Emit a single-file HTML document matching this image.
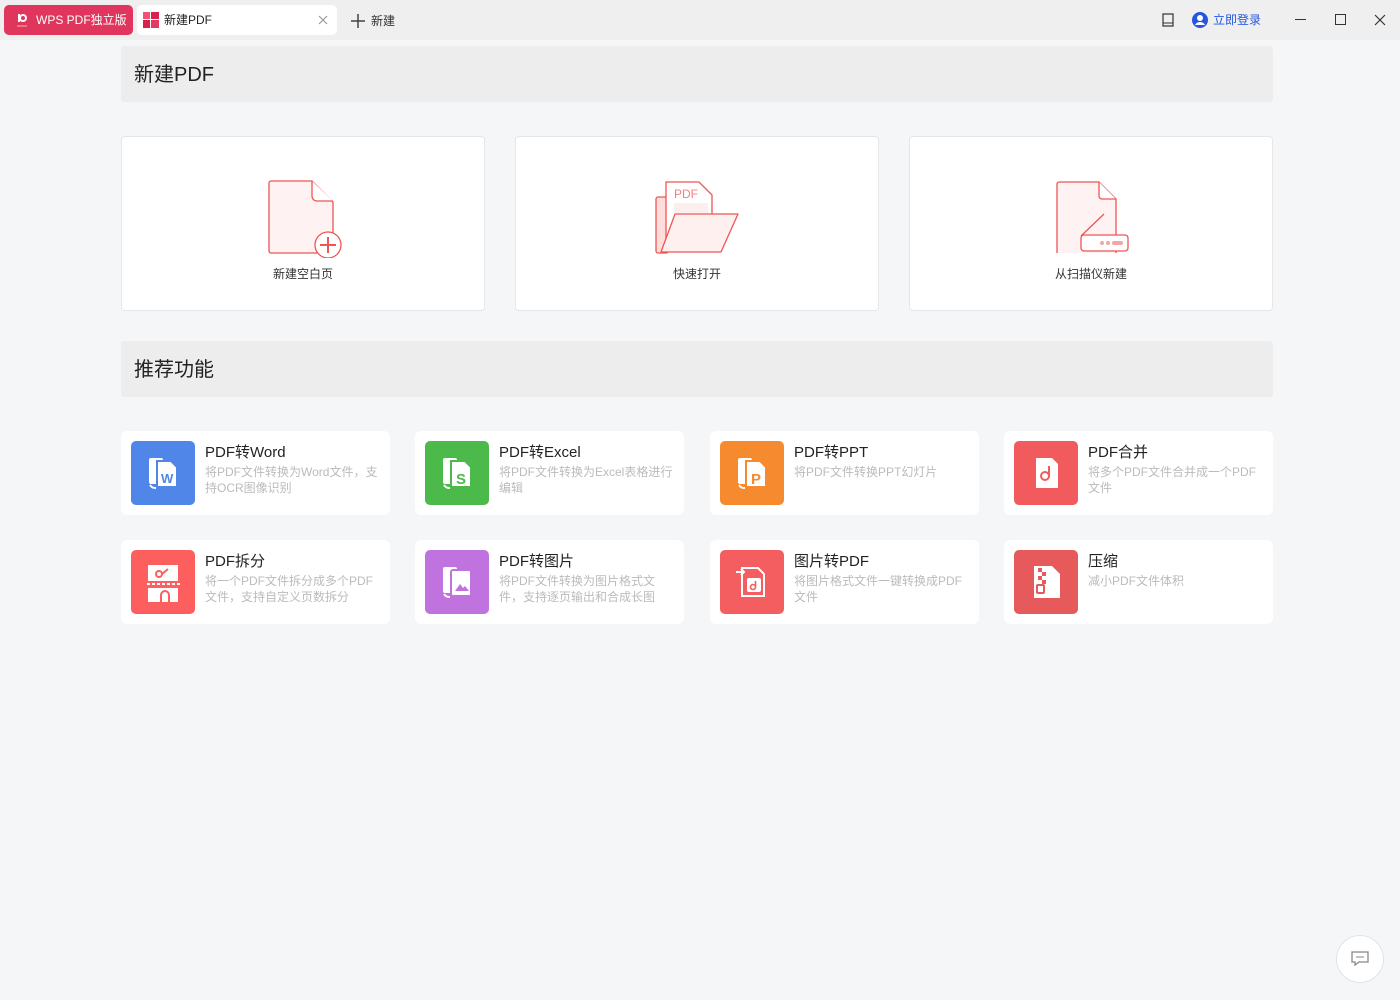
<!DOCTYPE html>
<html><head><meta charset="utf-8"><style>
*{margin:0;padding:0;box-sizing:border-box}
body{width:1400px;height:1000px;background:#f5f6f8;font-family:"Liberation Sans","Noto Sans CJK SC",sans-serif;position:relative;overflow:hidden;color:#222}
.top{position:absolute;left:0;top:0;width:1400px;height:40px;background:#efefef}
.abs{position:absolute;white-space:nowrap}
.sec{position:absolute;left:121px;width:1152px;height:56px;background:#ededed;border-radius:3px;font-size:20px;padding-left:13px;line-height:58px;color:#222}
.big{position:absolute;top:136px;width:364px;height:175px;background:#fff;border:1px solid #e6e6e6;border-radius:4px}
.big .lbl{position:absolute;top:128px;width:100%;text-align:center;font-size:12px;color:#333}
.fc{position:absolute;width:269px;height:84px;background:#fff;border-radius:6px}
.fc .ic{position:absolute;left:10px;top:10px;width:64px;height:64px;border-radius:5px}
.fc .t{position:absolute;left:84px;top:10px;font-size:15px;color:#222}
.fc .d{position:absolute;left:84px;top:33px;width:178px;font-size:12px;line-height:16px;color:#bbb}
</style></head><body>
<div class="top"></div>
<div class="abs" style="left:4px;top:5px;width:129px;height:30px;background:#e0355c;border-radius:5px;color:#fff;font-size:12px;line-height:30px;padding-left:32px">WPS PDF独立版</div>
<svg class="abs" style="left:14px;top:12px" width="16" height="16"><circle cx="9" cy="6" r="3" fill="none" stroke="#fff" stroke-width="2"/><path d="M5 2v8" stroke="#fff" stroke-width="2"/><path d="M3 14h10" stroke="#f88" stroke-width="1.5"/></svg>
<div class="abs" style="left:137px;top:5px;width:200px;height:30px;background:#fff;border-radius:5px;font-size:12px;line-height:30px;padding-left:27px;color:#222">新建PDF</div>
<svg class="abs" style="left:143px;top:12px" width="16" height="16"><rect x="0" y="0" width="7" height="7" fill="#f44f7a"/><rect x="8" y="0" width="8" height="7" fill="#d8214d"/><rect x="0" y="8" width="7" height="8" fill="#d8214d"/><rect x="8" y="8" width="8" height="8" fill="#e33a62"/></svg>
<svg class="abs" style="left:318px;top:15px" width="10" height="10"><path d="M1 1l8 8M9 1l-8 8" stroke="#999" stroke-width="1.2"/></svg>
<svg class="abs" style="left:351px;top:14px" width="14" height="14"><path d="M7 0v14M0 7h14" stroke="#444" stroke-width="1.5"/></svg>
<div class="abs" style="left:371px;top:12px;font-size:12px;color:#333">新建</div>
<svg class="abs" style="left:1162px;top:13px" width="12" height="14"><rect x="1" y="1" width="10" height="12" fill="none" stroke="#333" stroke-width="1.2"/><path d="M1 10h10" stroke="#333"/></svg>
<svg class="abs" style="left:1192px;top:12px" width="16" height="16"><circle cx="8" cy="8" r="8" fill="#2456e0"/><circle cx="8" cy="6" r="3" fill="#fff"/><path d="M3 13c2-4 8-4 10 0" fill="#fff"/></svg>
<div class="abs" style="left:1213px;top:11px;font-size:12px;color:#2456e0">立即登录</div>
<div class="abs" style="left:1295px;top:19px;width:11px;height:1px;background:#333"></div>
<div class="abs" style="left:1335px;top:14px;width:11px;height:11px;border:1.2px solid #333"></div>
<svg class="abs" style="left:1374px;top:14px" width="12" height="12"><path d="M1 1l10 10M11 1l-10 10" stroke="#333" stroke-width="1.2"/></svg>

<div class="sec" style="top:46px">新建PDF</div>
<div class="big" style="left:121px"><svg class="abs" style="left:146px;top:43px" width="76" height="78"><path d="M3 1h41l21 21v51H3a2 2 0 0 1-2-2V3a2 2 0 0 1 2-2z" fill="#fff2f2" stroke="#e55" stroke-width="1.3"/><path d="M44 1v15a5 5 0 0 0 5 5h16" fill="#fff" stroke="#e55" stroke-width="1.3"/><circle cx="60" cy="65" r="13" fill="#fff" stroke="#e55" stroke-width="1.3"/><path d="M60 57v16M52 65h16" stroke="#e55" stroke-width="2"/></svg><div class="lbl">新建空白页</div></div>
<div class="big" style="left:515px"><svg class="abs" style="left:139px;top:44px" width="88" height="76"><rect x="1" y="16" width="12" height="56" rx="2" fill="#fdd" stroke="#e55" stroke-width="1.3"/><path d="M11 1h33l13 13v52H11z" fill="#fff" stroke="#e55" stroke-width="1.3"/><text x="19" y="17" font-size="12" fill="#f08080" font-family="Liberation Sans">PDF</text><rect x="19" y="22" width="34" height="10" fill="#fdeeee"/><path d="M20 33h63l-17 38H6z" fill="#fff0f0" stroke="#e55" stroke-width="1.3" stroke-linejoin="round"/></svg><div class="lbl">快速打开</div></div>
<div class="big" style="left:909px"><svg class="abs" style="left:146px;top:44px" width="76" height="72"><path d="M3 1h40l17 17v57H3a2 2 0 0 1-2-2V3a2 2 0 0 1 2-2z" fill="#fff2f2" stroke="#e55" stroke-width="1.3"/><path d="M43 1v14a3 3 0 0 0 3 3h14" fill="#fff" stroke="#e55" stroke-width="1.3"/><path d="M48 33L25 55" stroke="#e55" stroke-width="1.3"/><rect x="25" y="54" width="47" height="16" rx="3" fill="#fff" stroke="#e55" stroke-width="1.3"/><circle cx="46" cy="62" r="2" fill="#f5a5a5"/><circle cx="52" cy="62" r="2" fill="#f5a5a5"/><rect x="56" y="60" width="11" height="4" rx="2" fill="#f5a5a5"/></svg><div class="lbl">从扫描仪新建</div></div>

<div class="sec" style="top:341px">推荐功能</div>

<div class="fc" style="left:121px;top:431px"><div class="ic" style="background:#4f86e7"></div><svg class="abs" style="left:26px;top:26px" width="34" height="34"><rect x="2" y="1" width="14" height="26" rx="2" fill="#fff"/><path d="M10 4h14l6 6v20H10z" fill="#fff" stroke="#4f86e7" stroke-width="2"/><text x="14" y="26" font-size="13" font-weight="bold" fill="#4f86e7">W</text><path d="M3 28c2 3 4 3 6 3" stroke="#fff" stroke-width="2" fill="none"/></svg><div class="t">PDF转Word</div><div class="d">将PDF文件转换为Word文件，支持OCR图像识别</div></div>
<div class="fc" style="left:415px;top:431px"><div class="ic" style="background:#4bba4a"></div><svg class="abs" style="left:26px;top:26px" width="34" height="34"><rect x="2" y="1" width="14" height="26" rx="2" fill="#fff"/><path d="M10 4h14l6 6v20H10z" fill="#fff" stroke="#4bba4a" stroke-width="2"/><text x="15" y="27" font-size="15" font-weight="bold" fill="#4bba4a">S</text><path d="M3 28c2 3 4 3 6 3" stroke="#fff" stroke-width="2" fill="none"/></svg><div class="t">PDF转Excel</div><div class="d">将PDF文件转换为Excel表格进行编辑</div></div>
<div class="fc" style="left:710px;top:431px"><div class="ic" style="background:#f68a2f"></div><svg class="abs" style="left:26px;top:26px" width="34" height="34"><rect x="2" y="1" width="14" height="26" rx="2" fill="#fff"/><path d="M10 4h14l6 6v20H10z" fill="#fff" stroke="#f68a2f" stroke-width="2"/><text x="15" y="27" font-size="15" font-weight="bold" fill="#f68a2f">P</text><path d="M3 28c2 3 4 3 6 3" stroke="#fff" stroke-width="2" fill="none"/></svg><div class="t">PDF转PPT</div><div class="d">将PDF文件转换PPT幻灯片</div></div>
<div class="fc" style="left:1004px;top:431px"><div class="ic" style="background:#f25b5e"></div><svg class="abs" style="left:24px;top:24px" width="36" height="36"><path d="M8 3h16l6 6v24H8z" fill="#fff"/><circle cx="17" cy="21" r="4" fill="none" stroke="#f25b5e" stroke-width="2"/><path d="M21 21V11" stroke="#f25b5e" stroke-width="2"/></svg><div class="t">PDF合并</div><div class="d" style="width:170px">将多个PDF文件合并成一个PDF文件</div></div>

<div class="fc" style="left:121px;top:540px"><div class="ic" style="background:#fd5e5e"></div><svg class="abs" style="left:26px;top:24px" width="34" height="38"><path d="M1 1h30v16H1zM1 24h30v14H1z" fill="#fff"/><path d="M0 20h34" stroke="#fff" stroke-width="2" stroke-dasharray="3 2"/><circle cx="12" cy="10" r="3" fill="none" stroke="#fd5e5e" stroke-width="2"/><path d="M15 10l6-5M14 38v-7a4 4 0 0 1 8 0v7" stroke="#fd5e5e" stroke-width="2" fill="none"/></svg><div class="t">PDF拆分</div><div class="d" style="width:170px">将一个PDF文件拆分成多个PDF文件，支持自定义页数拆分</div></div>
<div class="fc" style="left:415px;top:540px"><div class="ic" style="background:#c073de"></div><svg class="abs" style="left:26px;top:26px" width="34" height="34"><rect x="2" y="1" width="14" height="26" rx="2" fill="#fff"/><rect x="10" y="4" width="20" height="26" rx="2" fill="#fff" stroke="#c073de" stroke-width="2"/><path d="M14 25l5-7 3 4 2-2 4 5z" fill="#c073de"/><path d="M3 28c2 3 4 3 6 3" stroke="#fff" stroke-width="2" fill="none"/></svg><div class="t">PDF转图片</div><div class="d" style="width:160px">将PDF文件转换为图片格式文件，支持逐页输出和合成长图</div></div>
<div class="fc" style="left:710px;top:540px"><div class="ic" style="background:#f55e60"></div><svg class="abs" style="left:24px;top:24px" width="36" height="36"><path d="M8 4h16l6 6v22H8z" fill="none" stroke="#fff" stroke-width="2"/><path d="M2 8h8M7 5l3 3-3 3" stroke="#fff" stroke-width="2" fill="none"/><rect x="13" y="14" width="14" height="14" rx="2" fill="#fff"/><circle cx="19" cy="23" r="2.5" fill="none" stroke="#f55e60" stroke-width="1.6"/><path d="M21.5 23v-6" stroke="#f55e60" stroke-width="1.6"/></svg><div class="t">图片转PDF</div><div class="d" style="width:170px">将图片格式文件一键转换成PDF文件</div></div>
<div class="fc" style="left:1004px;top:540px"><div class="ic" style="background:#e65a5c"></div><svg class="abs" style="left:26px;top:24px" width="34" height="36"><path d="M4 2h18l8 8v24H4z" fill="#fff"/><path d="M8 4h4v4h-4zM12 8h4v4h-4zM8 12h4v4h-4zM12 16h4v4h-4z" fill="#e65a5c"/><rect x="7" y="21" width="7" height="8" rx="1" fill="none" stroke="#e65a5c" stroke-width="2"/></svg><div class="t">压缩</div><div class="d">减小PDF文件体积</div></div>

<div class="abs" style="left:1336px;top:935px;width:48px;height:48px;border-radius:50%;background:#fff;border:1px solid #e3e3e3"></div>
<svg class="abs" style="left:1351px;top:951px" width="18" height="16"><path d="M1 1h16v10H8l-4 3v-3H1z" fill="none" stroke="#888" stroke-width="1.3"/><path d="M5 6h8" stroke="#888"/></svg>
</body></html>
